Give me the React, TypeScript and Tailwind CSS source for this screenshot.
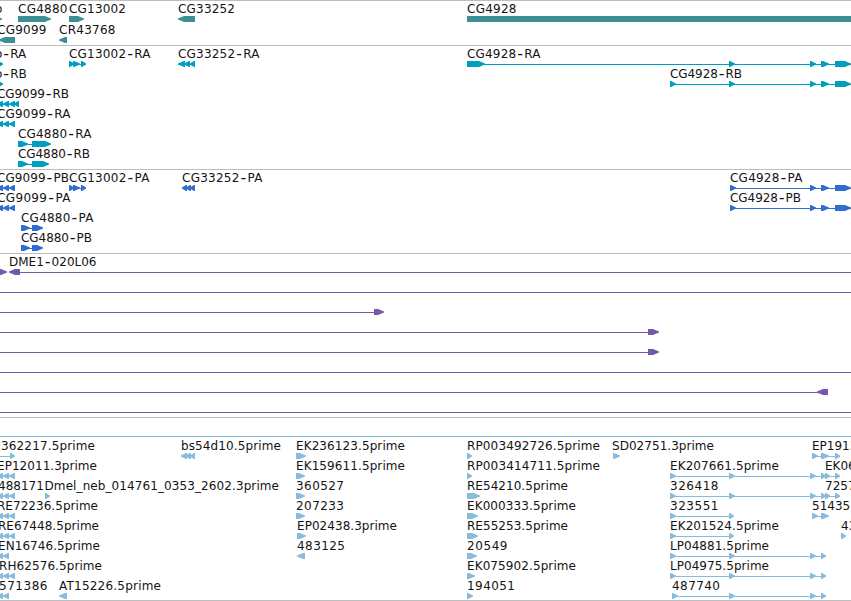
import React from "react";

// [start, end, direction]; direction 0 is a plain block
type Exon = [number, number, (-1 | 0 | 1)?];

interface Feature {
  label?: string;
  x?: number;
  w?: number;
  exons?: Exon[];
  line?: [number, number];
}

type Lane = Feature[];

interface Track {
  name: string;
  color: string;
  height: string;
  laneHeight: string;
  lanes: Lane[];
}

const genes: Lane[] = [
  [
    { label: "o", x: -5, exons: [[-12, 2, 1]] },
    { label: "CG4880", x: 18, w: 49.5, exons: [[18, 51, 1]] },
    { label: "CG13002", x: 69, w: 57, exons: [[69, 84, 1]] },
    { label: "CG33252", x: 178, w: 57, exons: [[178, 195, -1]] },
    { label: "CG4928", x: 467, w: 49.5, exons: [[467, 860, 0]] },
  ],
  [
    { label: "CG9099", x: -3, w: 49.5, exons: [[-1, 15, -1]] },
    { label: "CR43768", x: 59, w: 56.5, exons: [[59, 67, -1]] },
  ],
];

const transcripts: Lane[] = [
  [
    { label: "o-RA", x: -5, exons: [[-2, 3, 1]] },
    { label: "CG13002-RA", x: 69, w: 81.5, exons: [[69, 74, 1], [73, 80, 1], [81, 86, 1]], line: [69, 86] },
    { label: "CG33252-RA", x: 178, w: 81.5, exons: [[178, 185, -1], [184, 190, -1], [190, 195, -1]], line: [178, 195] },
    { label: "CG4928-RA", x: 467, w: 73.5, exons: [[467, 485, 1], [729, 735, 1], [810, 816, 1], [821, 829, 1], [835, 851, 1]], line: [480, 851] },
  ],
  [
    { label: "o-RB", x: -5, exons: [[-2, 3, 1]] },
    { label: "CG4928-RB", x: 670, w: 72, exons: [[670, 676, 1], [729, 735, 1], [810, 816, 1], [821, 829, 1], [835, 851, 1]], line: [670, 851] },
  ],
  [{ label: "CG9099-RB", x: -3, w: 72, exons: [[-3, 3, -1], [3, 9, -1], [9, 15, -1], [14, 19, -1]], line: [0, 19] }],
  [{ label: "CG9099-RA", x: -3, w: 73.5, exons: [[-3, 3, -1], [3, 9, -1], [9, 15, -1]], line: [0, 15] }],
  [{ label: "CG4880-RA", x: 18, w: 73.5, exons: [[18, 28, 1], [32, 51, 1]], line: [18, 50] }],
  [{ label: "CG4880-RB", x: 18, w: 72, exons: [[18, 28, 1], [32, 49, 1]], line: [18, 48] }],
];

const proteins: Lane[] = [
  [
    { label: "CG9099-PB", x: -3, w: 72, exons: [[-3, 3, -1], [3, 9, -1], [9, 15, -1]], line: [0, 15] },
    { label: "CG13002-PA", x: 69, w: 80.5, exons: [[69, 74, 1], [73, 80, 1], [81, 86, 1]], line: [69, 86] },
    { label: "CG33252-PA", x: 182, w: 80.5, exons: [[182, 187, -1], [186, 191, -1], [190, 195, -1]], line: [182, 195] },
    { label: "CG4928-PA", x: 730, w: 72.5, exons: [[730, 736, 1], [810, 816, 1], [821, 829, 1], [835, 851, 1]], line: [730, 851] },
  ],
  [
    { label: "CG9099-PA", x: -3, w: 73.5, exons: [[-3, 3, -1], [3, 9, -1], [9, 15, -1]], line: [0, 15] },
    { label: "CG4928-PB", x: 730, w: 71, exons: [[730, 736, 1], [810, 816, 1], [821, 829, 1], [835, 851, 1]], line: [730, 851] },
  ],
  [{ label: "CG4880-PA", x: 21, w: 72.5, exons: [[21, 30, 1], [32, 43, 1]], line: [21, 42] }],
  [{ label: "CG4880-PB", x: 21, w: 71, exons: [[21, 30, 1], [32, 43, 1]], line: [21, 42] }],
];

const clones: Lane[] = [
  [
    { exons: [[-5, 7, 1]] },
    { label: "DME1-020L06", x: 9, w: 87.5, exons: [[9, 20, -1]], line: [18, 851] },
  ],
  [{ line: [0, 851] }],
  [{ exons: [[374, 384, 1]], line: [0, 376] }],
  [{ exons: [[648, 659, 1]], line: [0, 650] }],
  [{ exons: [[648, 659, 1]], line: [0, 650] }],
  [{ line: [0, 851] }],
  [{ exons: [[817, 828, -1]], line: [0, 820] }],
  [{ line: [0, 851] }],
];

const leftTriple: Exon[] = [[-3, 3, -1], [3, 9, -1], [9, 15, -1]];
const leftPair: Exon[] = [[-3, 3, -1], [3, 9, -1]];

const ests: Lane[] = [
  [{ line: [0, 851] }],
  [
    { label: "362217.5prime", x: 1, w: 94, exons: [[10, 15, 1]], line: [0, 12] },
    { label: "bs54d10.5prime", x: 181, w: 100, exons: [[181, 187, -1], [185, 191, -1], [190, 195, -1]], line: [181, 195] },
    { label: "EK236123.5prime", x: 296, w: 109, exons: [[296, 306, 1]] },
    { label: "RP003492726.5prime", x: 467, w: 133, exons: [[467, 472, 1]] },
    { label: "SD02751.3prime", x: 612, w: 102, exons: [[613, 620, 1]] },
    { label: "EP19139.5prime", x: 812, exons: [[812, 818, 1], [821, 829, 1], [835, 840, 1]], line: [812, 840] },
  ],
  [
    { label: "EP12011.3prime", x: -3, w: 100, exons: leftTriple, line: [0, 15] },
    { label: "EK159611.5prime", x: 296, w: 109, exons: [[296, 305, 1]] },
    { label: "RP003414711.5prime", x: 467, w: 133, exons: [[467, 472, 1]] },
    { label: "EK207661.5prime", x: 670, w: 109, exons: [[670, 676, 1], [729, 735, 1], [810, 816, 1], [821, 826, 1], [825, 830, 1], [835, 840, 1]], line: [670, 840] },
    { label: "EK0612", x: 825 },
  ],
  [
    { label: "488171", x: -2, exons: leftTriple, line: [0, 15] },
    { label: "Dmel_neb_014761_0353_2602.3prime", x: 44.5, w: 234.5, exons: [[45, 50, 1]] },
    { label: "360527", x: 296, w: 48, exons: [[296, 305, 1]] },
    { label: "RE54210.5prime", x: 467, w: 101, exons: [[467, 480, 1]] },
    { label: "326418", x: 670, w: 48.5, exons: [[670, 676, 1], [729, 735, 1], [810, 816, 1], [821, 826, 1], [825, 830, 1], [835, 840, 1]], line: [670, 840] },
    { label: "72571", x: 825 },
  ],
  [
    { label: "RE72236.5prime", x: -3, w: 101, exons: leftTriple, line: [0, 15] },
    { label: "207233", x: 296, w: 48, exons: [[296, 305, 1]] },
    { label: "EK000333.5prime", x: 467, w: 109, exons: [[467, 478, 1]] },
    { label: "323551", x: 670, w: 48.5, exons: [[670, 676, 1], [729, 734, 1]], line: [670, 733] },
    { label: "51435", x: 812, exons: [[812, 818, 1], [821, 829, 1]], line: [812, 826] },
  ],
  [
    { label: "RE67448.5prime", x: -2, w: 101, exons: leftTriple, line: [0, 15] },
    { label: "EP02438.3prime", x: 297, w: 100, exons: [[297, 306, 1]] },
    { label: "RE55253.5prime", x: 467, w: 101, exons: [[467, 478, 1]] },
    { label: "EK201524.5prime", x: 670, w: 109, exons: [[670, 676, 1], [729, 734, 1]], line: [670, 733] },
    { label: "43", x: 841, exons: [[841, 846, 1]] },
  ],
  [
    { label: "EN16746.5prime", x: -2, w: 102, exons: leftPair, line: [0, 9] },
    { label: "483125", x: 297, w: 48, exons: [[297, 305, -1]] },
    { label: "20549", x: 467, w: 40.5, exons: [[467, 477, 1]] },
    { label: "LP04881.5prime", x: 670, w: 99, exons: [[670, 676, 1], [729, 735, 1], [810, 816, 1], [821, 826, 1]], line: [670, 826] },
  ],
  [
    { label: "RH62576.5prime", x: -1, w: 103, exons: leftTriple, line: [0, 15] },
    { label: "EK075902.5prime", x: 467, w: 109, exons: [[467, 475, 1]] },
    { label: "LP04975.5prime", x: 670, w: 99, exons: [[670, 676, 1], [729, 735, 1], [810, 816, 1], [821, 826, 1]], line: [670, 826] },
  ],
  [
    { label: "571386", x: -1, w: 48.5, exons: leftPair, line: [0, 9] },
    { label: "AT15226.5prime", x: 59, w: 102, exons: [[59, 67, -1]] },
    { label: "194051", x: 467, w: 48, exons: [[467, 473, 1]] },
    { label: "487740", x: 672, w: 48, exons: [[672, 678, 1], [729, 735, 1], [810, 816, 1], [821, 826, 1]], line: [672, 826] },
  ],
];

const tracks: Track[] = [
  { name: "genes", color: "text-[#3c8f94]", height: "h-[45px]", laneHeight: "h-[21px]", lanes: genes },
  { name: "transcripts", color: "text-[#009fbf]", height: "h-[124px]", laneHeight: "h-5", lanes: transcripts },
  { name: "proteins", color: "text-[#316ccf]", height: "h-[84px]", laneHeight: "h-5", lanes: proteins },
  { name: "clones", color: "text-[#7559a9]", height: "h-[164px]", laneHeight: "h-5", lanes: clones },
  { name: "ests", color: "text-[#87bcde]", height: "h-[183px]", laneHeight: "h-5", lanes: ests },
];

function exonPoints([a, b, dir = 1]: Exon) {
  if (dir === 0) return `${a},16 ${b},16 ${b},22 ${a},22`;
  const tip = Math.min(6, b - a - 1);
  return dir > 0
    ? `${a},16 ${b - tip},16 ${b},18.5 ${b},19.5 ${b - tip},22 ${a},22`
    : `${b},16 ${a + tip},16 ${a},18.5 ${a},19.5 ${a + tip},22 ${b},22`;
}

function Label({ text, x, w }: { text: string; x: number; w?: number }) {
  const [head, tail] = text.split("-");
  return (
    <text x={x} y={13} textLength={w} className="fill-[#141414] text-[12px]">
      {head}
      {tail !== undefined && (
        <>
          <tspan dx={1} dy={0.9} className="text-[16px]">-</tspan>
          <tspan dx={1} dy={-0.9}>{tail}</tspan>
        </>
      )}
    </text>
  );
}

function LaneView({ lane, size }: { lane: Lane; size: string }) {
  return (
    <svg className={`block w-full shrink-0 overflow-visible ${size}`}>
      {lane.map((f, i) => (
        <g key={i} fill="currentColor">
          {f.line && <rect x={f.line[0]} y={19} width={f.line[1] - f.line[0]} height={1} />}
          {f.exons?.map((e, j) => <polygon key={j} points={exonPoints(e)} />)}
          {f.label && <Label text={f.label} x={f.x ?? 0} w={f.w} />}
        </g>
      ))}
    </svg>
  );
}

export default function App() {
  return (
    <main className="flex h-[601px] w-[851px] flex-col overflow-hidden bg-white font-['DejaVu_Sans',sans-serif]">
      {tracks.map((t) => (
        <section key={t.name} className={`flex shrink-0 flex-col shadow-[inset_0_1px_0_#bebebe] ${t.height} ${t.color}`}>
          {t.lanes.map((lane, i) => (
            <LaneView key={i} lane={lane} size={t.laneHeight} />
          ))}
        </section>
      ))}
      <div className="h-px shrink-0 bg-[#bebebe]" />
    </main>
  );
}
